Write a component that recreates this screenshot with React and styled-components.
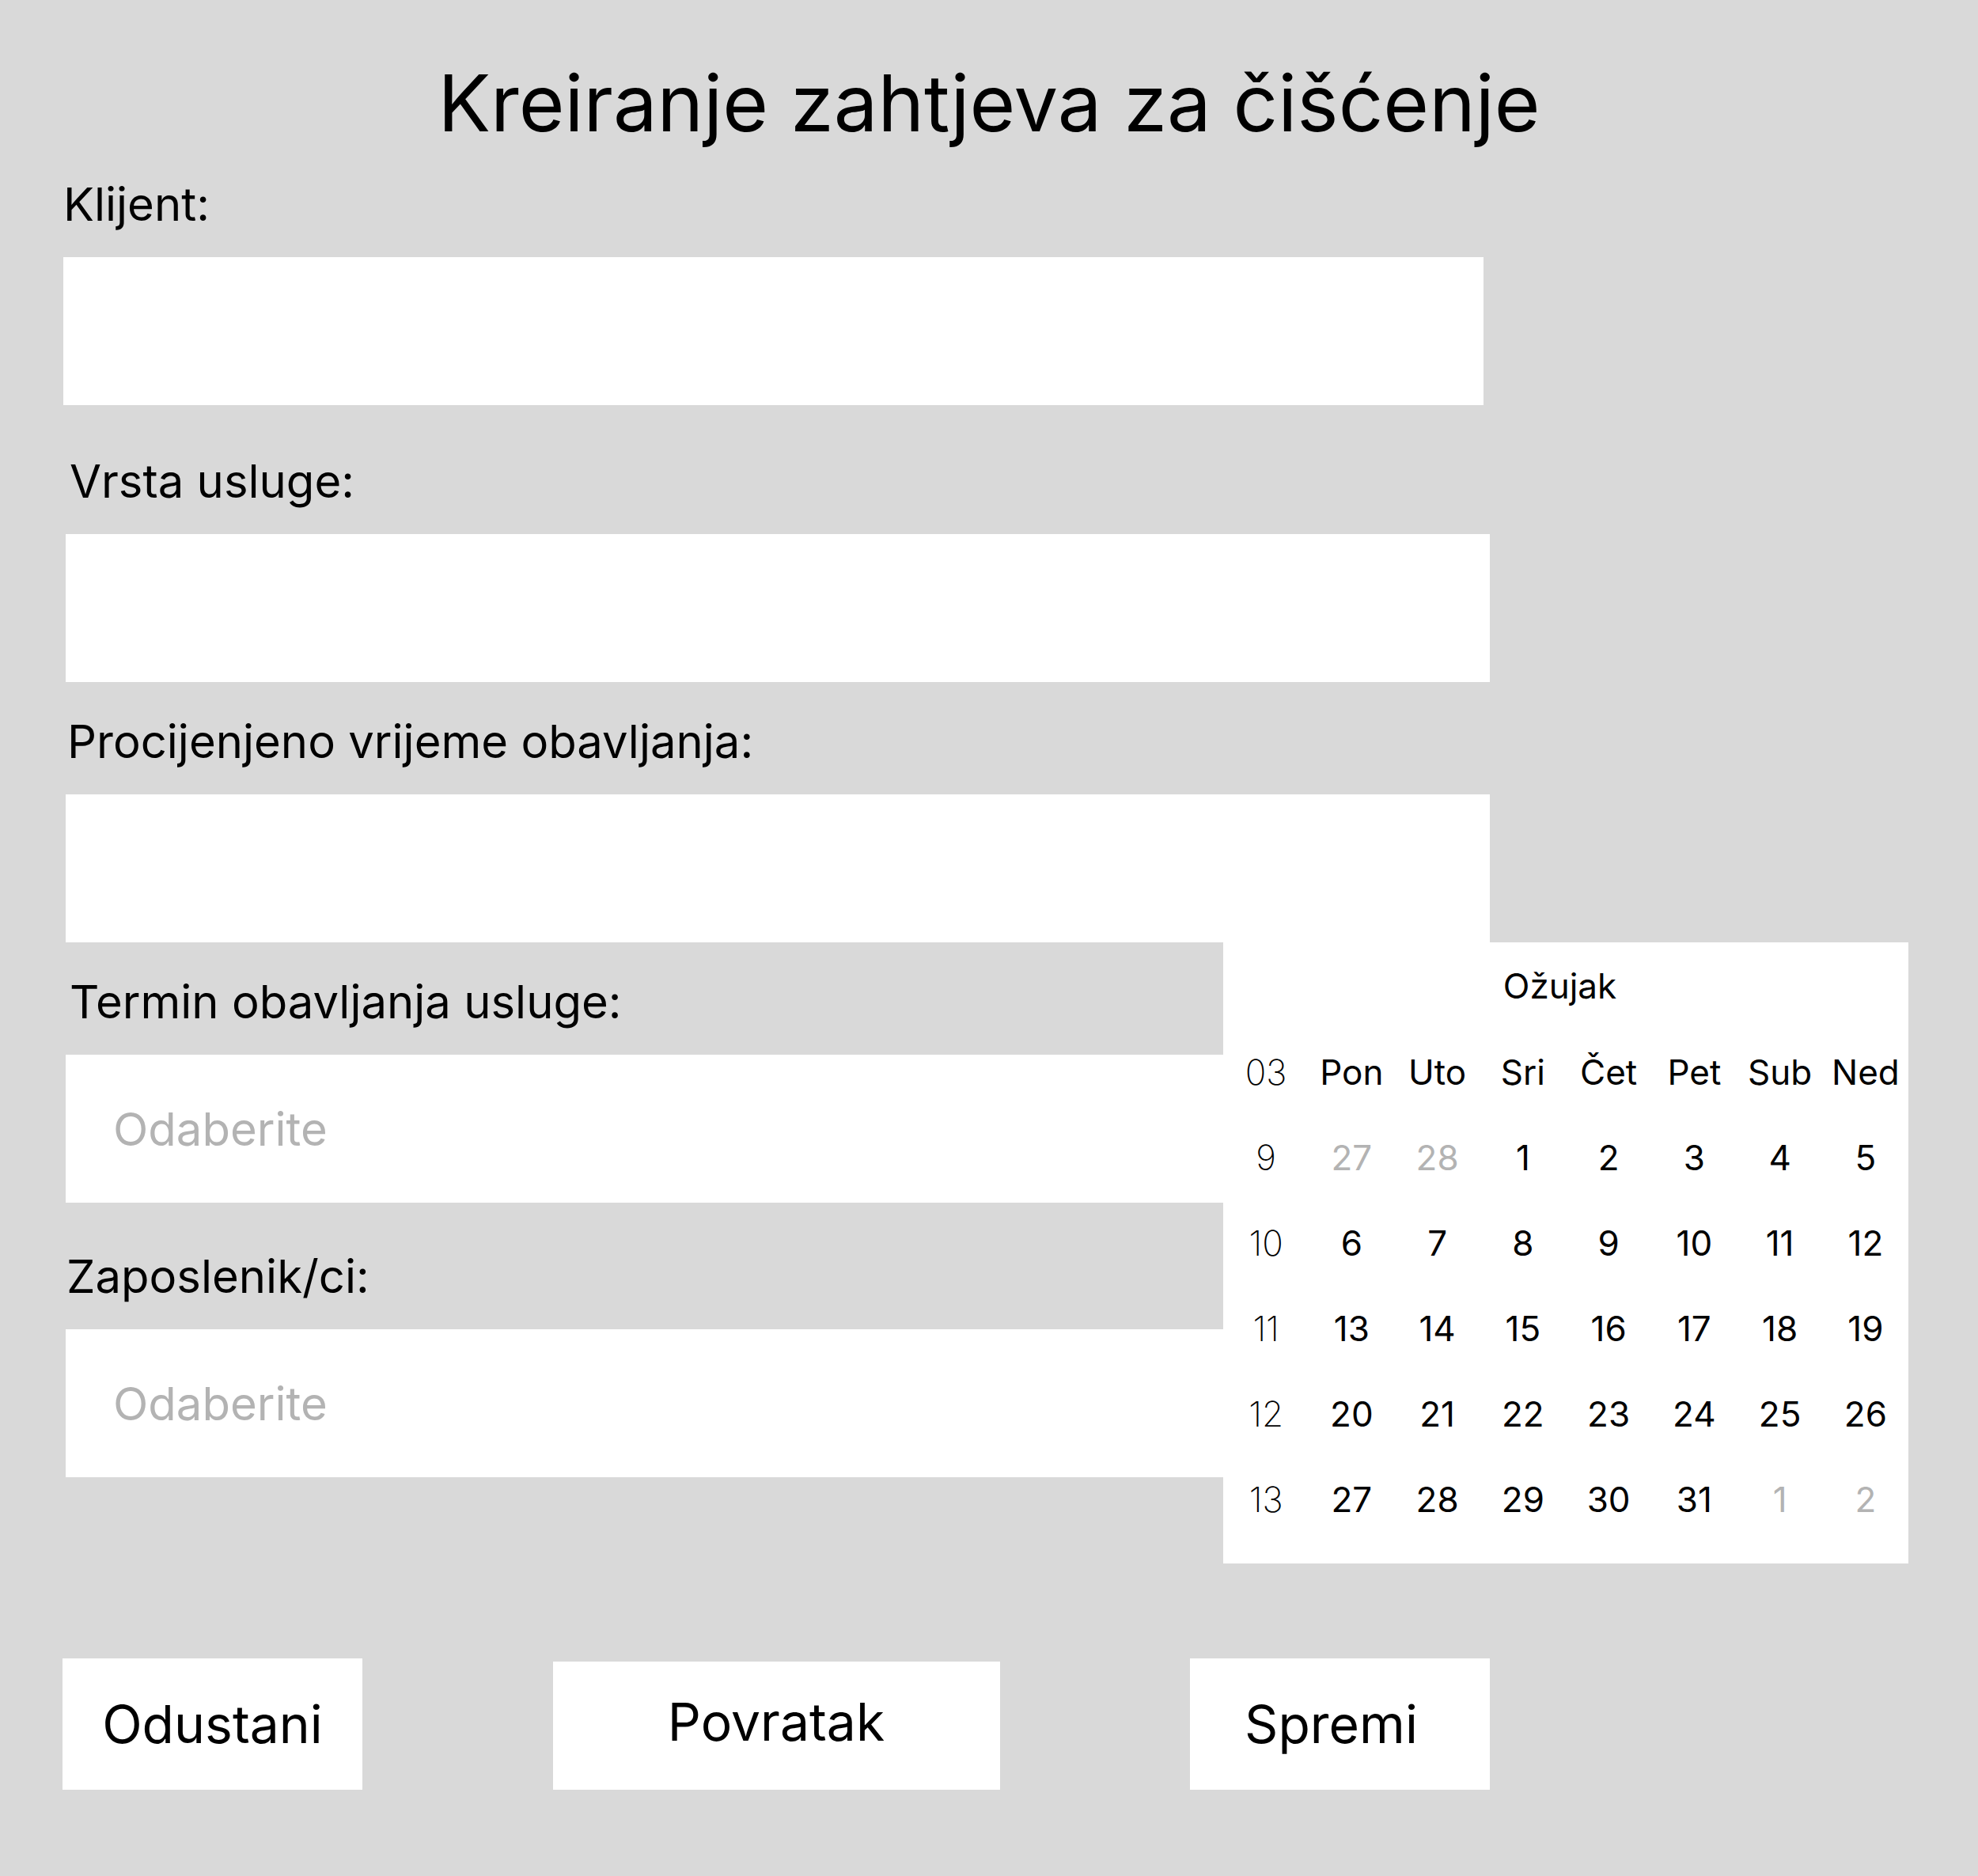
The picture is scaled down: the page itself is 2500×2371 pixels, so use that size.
import styled, { createGlobalStyle } from 'styled-components'

const GlobalStyle = createGlobalStyle`
    body {
        margin: 0;
        background: #d9d9d9;
        font-family: Inter, "Noto Sans", sans-serif;
        color: #000;
    }
`

const Page = styled.div`
    position: relative;
    width: 2500px;
    min-height: 2371px;
    padding-top: 70px;
    box-sizing: border-box;
`

const Title = styled.h1`
    margin: 0 0 32px;
    font-size: 99.2px;
    font-weight: 400;
    line-height: 121px;
    text-align: center;
`

const Field = styled.div`
    display: flex;
    flex-direction: column;
    gap: 32px;
    width: ${p => p.$width}px;
    margin-left: ${p => p.$left}px;
    margin-top: ${p => p.$top}px;
`

const Label = styled.label`
    font-size: 58px;
    line-height: 70px;
    padding-left: ${p => p.$indent || 0}px;
`

const Input = styled.input`
    height: 187px;
    border: none;
    outline: none;
    background: #fff;
    padding: 0 0 0 60px;
    font-family: inherit;
    font-size: 58px;
    color: #000;

    &::placeholder {
        color: #b3b3b3;
    }
`

const Buttons = styled.div`
    display: flex;
    justify-content: space-between;
    align-items: flex-end;
    width: 1804px;
    margin: 229px 0 0 79px;
`

const Button = styled.button`
    width: ${p => p.$width}px;
    height: ${p => p.$height}px;
    border: none;
    background: #fff;
    font-family: inherit;
    font-size: 66px;
    color: #000;
    padding: 0 ${p => p.$shift || 0}px ${p => p.$lift || 0}px 0;
    cursor: pointer;
`

const Calendar = styled.div`
    position: absolute;
    left: 1546px;
    top: 1191px;
    width: 866px;
    padding-bottom: 27px;
    background: #fff;
`

const Month = styled.div`
    height: 110px;
    display: flex;
    align-items: center;
    justify-content: center;
    padding-right: 15px;
    font-size: 44px;
`

const Grid = styled.div`
    display: grid;
    grid-template-columns: repeat(8, 1fr);
    grid-auto-rows: 108px;
`

const Cell = styled.div`
    display: flex;
    align-items: center;
    justify-content: center;
    font-size: 44px;
    font-weight: ${p => (p.$week ? 200 : 400)};
    color: ${p => (p.$muted ? '#b3b3b3' : '#000')};
`

const days = ['Pon', 'Uto', 'Sri', 'Čet', 'Pet', 'Sub', 'Ned']

const weeks = [
    { n: 9, d: [[27, 1], [28, 1], 1, 2, 3, 4, 5] },
    { n: 10, d: [6, 7, 8, 9, 10, 11, 12] },
    { n: 11, d: [13, 14, 15, 16, 17, 18, 19] },
    { n: 12, d: [20, 21, 22, 23, 24, 25, 26] },
    { n: 13, d: [27, 28, 29, 30, 31, [1, 1], [2, 1]] },
]

const App = () => {
    return (
        <Page>
            <GlobalStyle />
            <Title>Kreiranje zahtjeva za čišćenje</Title>

            <Field $width={1795} $left={80} $top={0}>
                <Label $indent={-4}>Klijent:</Label>
                <Input />
            </Field>
            <Field $width={1800} $left={83} $top={61}>
                <Label $indent={5}>Vrsta usluge:</Label>
                <Input />
            </Field>
            <Field $width={1800} $left={83} $top={40}>
                <Label $indent={2}>Procijenjeno vrijeme obavljanja:</Label>
                <Input />
            </Field>
            <Field $width={1800} $left={83} $top={40}>
                <Label $indent={5}>Termin obavljanja usluge:</Label>
                <Input placeholder="Odaberite" />
            </Field>
            <Field $width={1800} $left={83} $top={58}>
                <Label $indent={1}>Zaposlenik/ci:</Label>
                <Input placeholder="Odaberite" />
            </Field>

            <Buttons>
                <Button $width={379} $height={166}>Odustani</Button>
                <Button $width={565} $height={162} $lift={10}>Povratak</Button>
                <Button $width={379} $height={166} $shift={22}>Spremi</Button>
            </Buttons>

            <Calendar>
                <Month>Ožujak</Month>
                <Grid>
                    <Cell $week>03</Cell>
                    {days.map(d => <Cell key={d}>{d}</Cell>)}
                    {weeks.map(w => (
                        <>
                            <Cell key={'w' + w.n} $week>{w.n}</Cell>
                            {w.d.map((d, i) => Array.isArray(d)
                                ? <Cell key={w.n + '-' + i} $muted>{d[0]}</Cell>
                                : <Cell key={w.n + '-' + i}>{d}</Cell>
                            )}
                        </>
                    ))}
                </Grid>
            </Calendar>
        </Page>
    )
}

export default App
